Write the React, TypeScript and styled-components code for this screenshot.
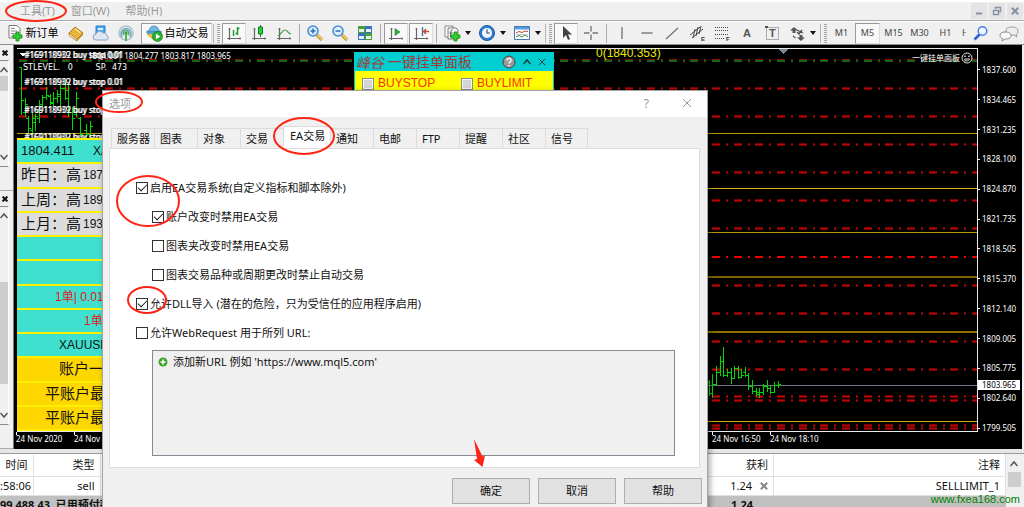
import React from "react";
import styled, { createGlobalStyle, css } from "styled-components";

const uiFont = `"Noto Sans", "Noto Sans CJK SC", sans-serif`;
const panelFont = `"Liberation Sans", "Noto Sans CJK SC", sans-serif`;

const GlobalStyle = createGlobalStyle`
  * { box-sizing: border-box; }
  html, body { margin: 0; background: #f0f0f0; }
  body { font: 11px/16px ${uiFont}; color: #111; }
  button { font: inherit; color: inherit; padding: 0; border: 0; background: none; }
`;

const Shell = styled.div`
  position: relative;
  display: flex;
  flex-direction: column;
  height: 100vh;
  overflow: hidden;
`;

/* ---------- menu ---------- */

const MenuBar = styled.nav`
  display: flex;
  align-items: center;
  flex: none;
  height: 21px;
  padding-left: 20px;
  border-top: 2px solid #fff;
  border-bottom: 1px solid #a9a9a9;
  background: #f0f0f0;
`;

const MenuItem = styled.button`
  margin-right: 16px;
  color: #999;
  white-space: nowrap;
`;

const WindowButtons = styled.div`
  display: flex;
  gap: 2px;
  margin-left: auto;
  padding-right: 1px;
`;

const WindowButton = styled.button`
  display: grid;
  place-items: center;
  width: 16px;
  height: 16px;
  background: #e4e4e4;
`;

/* ---------- toolbar ---------- */

const Toolbar = styled.div`
  display: flex;
  align-items: center;
  flex: none;
  gap: 1px;
  height: 24px;
  padding-left: 4px;
  border-top: 1px solid #fff;
  border-bottom: 1px solid #8d8d8d;
  background: #f0f0f0;
`;

const pressedLook = css`
  background: #f9f9f9;
  border: 1px solid #dcdcdc;
  border-top-color: #9a9a9a;
  border-left-color: #9a9a9a;
`;

const ToolButton = styled.button<{ $pressed?: boolean; $width?: number }>`
  display: flex;
  align-items: center;
  justify-content: center;
  flex: none;
  gap: 2px;
  width: ${(p) => p.$width ?? 24}px;
  height: 21px;
  overflow: hidden;
  white-space: nowrap;
  ${(p) => p.$pressed && pressedLook}
`;

const WideButton = styled(ToolButton)`
  color: #000;
`;

const ToolGroup = styled.div`
  display: flex;
  gap: 1px;
  margin: 0 2px 0 3px;
`;

const FrameButton = styled(ToolButton)`
  width: 25px;
  font-size: 9px;
  color: #444;
`;

const ClippedFrame = styled(FrameButton)`
  width: 7px;
  justify-content: flex-start;
  padding-left: 3px;
`;

const Separator = styled.span`
  flex: none;
  width: 1px;
  height: 19px;
  margin: 0 2px;
  background: #a8a8a8;
`;

const Grip = styled.span`
  flex: none;
  width: 8px;
  height: 19px;
  border-left: 1px solid #b4b4b4;
  background: repeating-linear-gradient(#a5a5a5 0 1px, #f0f0f0 1px 2px) 3px 0 / 3px 100% no-repeat;
`;

const Spacer = styled.span`
  flex: 1;
`;

const DropButton = styled(ToolButton)`
  width: 34px;
  gap: 4px;
`;

const Caret = styled.span`
  border: 3px solid transparent;
  border-top: 4px solid #111;
  border-bottom: 0;
`;

/* ---------- workspace ---------- */

const Workspace = styled.main`
  display: grid;
  grid-template-columns: 14px minmax(0, 1fr) 2px;
  flex: 1;
  min-height: 0;
`;

const SideColumn = styled.aside`
  display: grid;
  grid-template-rows: 146px minmax(0, 1fr);
  background: #f0f0f0;
  border-right: 1px solid #777;
`;

const SidePanel = styled.section`
  display: flex;
  flex-direction: column;
  padding-bottom: 23px;
  border-bottom: 1px solid #aaa;
`;

const SideClose = styled.button`
  display: flex;
  align-items: center;
  height: 15px;
  padding-left: 2px;
`;

const Scroller = styled.div`
  display: flex;
  flex: 1;
  flex-direction: column;
  justify-content: space-between;
  width: 9px;
  padding: 5px 0;
  border: 1px solid #8a8a8a;
  border-left: 0;
  border-right-color: #fff;
`;

const ScrollThumb = styled.span<{ $size: number; $before: number }>`
  width: 8px;
  height: ${(p) => p.$size}px;
  margin-top: ${(p) => p.$before}px;
  margin-bottom: auto;
  background: #cdcdcd;
`;

const ChartWindow = styled.section`
  display: grid;
  grid-template-columns: minmax(0, 1fr) 44px;
  grid-template-rows: minmax(0, 1fr) 17px;
  padding: 3px 0 0 3px;
  background: #000;
  color: #fff;
  font-size: 8px;
  line-height: 10px;
`;

const Plot = styled.div`
  position: relative;
  overflow: hidden;
  border: 1px solid #e8e8e8;
  border-left: 0;
`;

const PlotDrawing = styled.svg`
  display: block;
  width: 100%;
  height: 100%;
`;

const PriceAxis = styled.div`
  position: relative;
  display: flex;
  flex-direction: column;
  grid-row: 1 / 3;
  grid-column: 2;
  padding: 7px 0 6px;
`;

const PriceLabel = styled.span`
  display: flex;
  align-items: center;
  flex: 1;
  &::before {
    content: "";
    width: 2px;
    height: 1px;
    margin-right: 2px;
    background: #fff;
  }
`;

const CurrentPrice = styled.span`
  position: absolute;
  top: 332px;
  left: 0;
  width: 42px;
  padding-left: 4px;
  background: #fff;
  color: #000;
`;

const TimeAxis = styled.div`
  display: grid;
  grid-template-columns: repeat(16, 58px);
  margin-left: -1px;
  overflow: hidden;
  white-space: nowrap;
`;

const TimeLabel = styled.span<{ $slot: number }>`
  grid-row: 1;
  grid-column: ${(p) => p.$slot};
  padding-top: 2px;
  &::before {
    content: "";
    display: block;
    width: 1px;
    height: 3px;
    margin: -2px 0 -1px;
    background: #fff;
  }
`;

const OrderNote = styled.span<{ $x: number; $y: number }>`
  position: absolute;
  left: ${(p) => p.$x}px;
  top: ${(p) => p.$y}px;
  white-space: pre;
`;

const LevelNote = styled(OrderNote)`
  font-family: "DejaVu Sans", sans-serif;
`;

const FibNote = styled(OrderNote)`
  color: #e8e800;
  font: 12px/12px ${panelFont};
`;

const OneClick = styled.button`
  position: absolute;
  top: 3px;
  right: 4px;
  display: flex;
  align-items: center;
  gap: 1px;
`;

/* ---------- info panel ---------- */

const InfoPanel = styled.div`
  position: absolute;
  top: 89px;
  bottom: 0;
  left: 0;
  display: flex;
  flex-direction: column;
  width: 200px;
  border-top: 2px solid #fff000;
`;

const rowColors = { teal: "#40e0d0", grey: "#dcdcdc", gold: "#ffd700" };

const InfoRow = styled.div<{ $tone: keyof typeof rowColors; $indent?: number; $red?: boolean }>`
  display: flex;
  align-items: center;
  flex: 1;
  gap: 2px;
  overflow: hidden;
  padding-left: ${(p) => p.$indent ?? 4}px;
  border-bottom: 2px solid #fff000;
  background: ${(p) => rowColors[p.$tone]};
  color: ${(p) => (p.$red ? "#e01818" : "#111")};
  font: 12px/20px ${panelFont};
  white-space: pre;
`;

const Quote = styled.span`
  width: 70px;
  font-size: 13px;
`;

const BigText = styled.span`
  font-size: 15px;
`;

/* ---------- pending order panel ---------- */

const OrderPanel = styled.div`
  position: absolute;
  top: 3px;
  left: 337px;
  width: 200px;
  height: 80px;
  border: 1px solid #00ced1;
  background: #ff0;
`;

const OrderPanelHead = styled.div`
  display: flex;
  align-items: center;
  height: 18px;
  padding: 0 7px 0 1px;
  background: #00ced1;
  color: #a03c3c;
  font: 14px/18px ${panelFont};
  white-space: nowrap;
`;

const Script = styled.span`
  margin-right: 4px;
  font-family: "Noto Sans CJK SC", serif;
  font-style: italic;
`;

const HeadTools = styled.span`
  display: flex;
  align-items: center;
  gap: 7px;
  margin-left: auto;
`;

const OrderPanelBody = styled.div`
  display: grid;
  grid-template-columns: 99px 1fr;
  padding: 6px 7px;
`;

const OrderKind = styled.label`
  display: flex;
  align-items: center;
  gap: 4px;
  color: #ff3000;
  font: 12px/13px ${panelFont};
`;

const GreyTick = styled.input`
  appearance: none;
  width: 12px;
  height: 12px;
  margin: 0;
  border: 1px solid #8c8c8c;
  background: #d4d4d4;
  box-shadow: inset 0 0 0 1px #f4f4f4;
`;

/* ---------- terminal ---------- */

const Terminal = styled.section`
  display: flex;
  align-items: flex-start;
  flex: none;
  height: 58px;
  overflow: hidden;
  border-top: 4px solid #e6e6e6;
  box-shadow: inset 0 1px #9c9c9c;
  padding: 1px 2px 0 0;
  background: #f0f0f0;
`;

const Trades = styled.table`
  flex: 1;
  border-collapse: collapse;
  table-layout: fixed;
  width: 100%;
  background: #fff;
  white-space: nowrap;
  td, th {
    height: 19px;
    padding: 0 5px 0 0;
    border-right: 1px solid #e0e0e0;
    border-bottom: 1px solid #e0e0e0;
    font-weight: 400;
    text-align: right;
    line-height: 16px;
  }
  th { height: 22px; }
`;

const Col = styled.col<{ $w?: number }>`
  width: ${(p) => (p.$w ? `${p.$w}px` : "auto")};
`;

const SummaryRow = styled.tr`
  background: #c0c0c0;
  && td {
    border-color: #c0c0c0;
    padding-right: 20px;
    font-weight: 700;
  }
  && td:first-child { padding: 0; text-align: left; }
`;

const Profit = styled.span`
  display: inline-flex;
  align-items: center;
  gap: 8px;
`;

const TerminalScroll = styled.div`
  display: flex;
  flex-direction: column;
  align-items: center;
  gap: 4px;
  width: 16px;
  padding-top: 6px;
  background: #f0f0f0;
`;

const TerminalThumb = styled.span`
  width: 13px;
  height: 15px;
  background: #cdcdcd;
`;

const SiteLink = styled.a`
  position: absolute;
  right: 4px;
  bottom: 0;
  color: #008000;
  font: 11px/16px ${panelFont};
  text-decoration: none;
`;

/* ---------- dialog ---------- */

const Dialog = styled.section`
  position: absolute;
  top: 90px;
  left: 102px;
  display: flex;
  flex-direction: column;
  width: 606px;
  padding-bottom: 12px;
  border: 1px solid #a4a4a4;
  background: #f0f0f0;
  box-shadow: 2px 2px 6px rgba(0, 0, 0, 0.35);
`;

const DialogTitle = styled.header`
  display: flex;
  align-items: center;
  height: 26px;
  padding: 0 15px 0 6px;
  background: #fff;
  color: #999;
`;

const TitleButtons = styled.div`
  display: flex;
  align-items: center;
  gap: 33px;
  margin-left: auto;
  font-size: 12px;
`;

const TabStrip = styled.div`
  display: flex;
  align-items: flex-end;
  height: 31px;
  padding-left: 8px;
`;

const Tab = styled.button<{ $active?: boolean }>`
  width: 43px;
  height: 20px;
  padding-left: 5px;
  border: 1px solid #dcdcdc;
  border-width: 1px 0 0 1px;
  text-align: left;
  white-space: nowrap;
  &:last-child { border-right-width: 1px; }
  ${(p) =>
    p.$active &&
    css`
      width: 47px;
      height: 23px;
      margin-bottom: -1px;
      padding: 0 0 4px 6px;
      background: #fff;
    `}
`;

const TabPage = styled.div`
  margin: 0 7px 0 6px;
  padding: 24px 24px 11px 26px;
  border: 1px solid #dcdcdc;
  background: #fff;
`;

const Option = styled.label<{ $nested?: boolean }>`
  display: flex;
  align-items: center;
  gap: 2px;
  height: 29px;
  padding-left: ${(p) => (p.$nested ? 16 : 0)}px;
  white-space: nowrap;
`;

const Tick = styled.input`
  appearance: none;
  display: grid;
  place-items: center;
  width: 12px;
  height: 12px;
  margin: 0;
  border: 1px solid #333;
  background: #fff;
  &:checked::after {
    content: "";
    width: 8px;
    height: 4px;
    margin-bottom: 3px;
    border: 1px solid #222;
    border-width: 0 0 1px 1px;
    transform: rotate(-45deg);
  }
`;

const UrlList = styled.ul`
  height: 106px;
  margin: 3px 0 0 16px;
  padding: 2px 5px;
  border: 1px solid #858a94;
  background: #f0f0f0;
  list-style: none;
`;

const UrlItem = styled.li`
  display: flex;
  align-items: center;
  gap: 5px;
  height: 18px;
`;

const DialogButtons = styled.footer`
  display: flex;
  justify-content: flex-end;
  gap: 8px;
  padding: 10px 5px 0 0;
`;

const DialogButton = styled.button`
  width: 78px;
  height: 26px;
  border: 1px solid #adadad;
  background: #e1e1e1;
`;

const Marks = styled.svg`
  position: absolute;
  top: 0;
  left: 0;
  pointer-events: none;
`;

/* ---------- icons ---------- */

const Icon = ({ children, size = 18 }: { children: React.ReactNode; size?: number }) => (
  <svg width={size} height={size} viewBox="0 0 18 18" fill="none" aria-hidden="true">
    {children}
  </svg>
);

const Plus = ({ x, y }: { x: number; y: number }) => (
  <path
    d={`M${x} ${y}h3v3h3v3h-3v3h-3v-3h-3v-3h3z`}
    fill="#2fd02f"
    stroke="#0d8a0d"
    strokeWidth=".8"
  />
);

const Axes = () => (
  <path d="M4.500 4v12M2 14.500h14M3.500 5h2M15 13.500v2" stroke="#666" strokeWidth="1.200" />
);

const NewOrderIcon = () => (
  <Icon>
    <path d="M3 1.500h8l3 3V14H3z" fill="#fff" stroke="#777" />
    <path d="M5 4.500h4M5 7h6M5 9.500h5M5 12h3" stroke="#888" />
    <Plus x={10} y={8} />
  </Icon>
);

const BookIcon = () => (
  <Icon>
    <path d="M2 9l6-6 8 6-6 7z" fill="#e9b53c" stroke="#a87414" />
    <path d="M2 9v2.500l8 5.500V15z" fill="#fff3cf" stroke="#a87414" strokeWidth=".8" />
    <path d="M10 15.500l6-6.500v2l-6 6z" fill="#c58a1e" />
    <path d="M8 4.500l5.500 4.500" stroke="#fbe08a" strokeWidth="1.500" />
  </Icon>
);

const CloudIcon = () => (
  <Icon>
    <path d="M4 2h9v9H4z" fill="#4aa7ee" stroke="#2b7cc4" />
    <path d="M6 4h5v2H6zM6 7h2v3H6z" fill="#d9efff" />
    <path d="M4 16a3 3 0 010-6 4 4 0 017-1 3.500 3.500 0 014 3 2.200 2.200 0 010 4z" fill="#dfe6f2" stroke="#8ea2c2" />
  </Icon>
);

const SignalIcon = () => (
  <Icon>
    <circle cx="9" cy="9" r="7" stroke="#b0c4c8" strokeWidth="1.600" />
    <path d="M5.500 13a5 5 0 117 0" stroke="#6fa2c8" strokeWidth="1.500" />
    <path d="M7 11a2.800 2.800 0 114 0" stroke="#43a36b" strokeWidth="1.300" />
    <circle cx="9" cy="9" r="1.700" fill="#3aa13a" />
    <path d="M9 10v7" stroke="#49b34d" strokeWidth="2" />
  </Icon>
);

const AutoIcon = () => (
  <Icon>
    <path d="M2 10l7 6 7-5-2-3H4z" fill="#f0c63c" stroke="#b98d1c" strokeWidth=".8" />
    <ellipse cx="9" cy="8" rx="8" ry="2.500" fill="#4f9ed0" />
    <path d="M4 7.500C4 0 14 0 14 7.500z" fill="#6fb6e0" stroke="#3683b4" strokeWidth=".7" />
    <circle cx="12.500" cy="12.500" r="5" fill="#2eb135" stroke="#0f7a1a" strokeWidth=".7" />
    <path d="M11 9.800l4.300 2.700-4.300 2.700z" fill="#fff" />
  </Icon>
);

const BarsIcon = () => (
  <Icon>
    <Axes />
    <path d="M8.500 6v6M12.500 3v8M10.500 9.500h2M12.500 4.500h2" stroke="#16962a" strokeWidth="1.400" />
  </Icon>
);
const CandleIcon = () => (
  <Icon>
    <Axes />
    <path d="M10.500 1v12" stroke="#0b7f1c" />
    <path d="M8.500 3h4v7h-4z" fill="#28cf3c" stroke="#0b7f1c" />
  </Icon>
);
const LineIcon = () => (
  <Icon>
    <Axes />
    <path d="M3 12c3-1 4-6 7-6s2 3 6 4" stroke="#3a9d4a" strokeWidth="1.200" />
  </Icon>
);

const Lens = ({ minus }: { minus?: boolean }) => (
  <Icon>
    <path d="M11 11l5 5" stroke="#c79b2c" strokeWidth="3.200" />
    <path d="M11.500 11l4.500 4.500" stroke="#f3d778" strokeWidth="1.200" />
    <circle cx="7" cy="7" r="5" fill="#dcefff" stroke="#4a8ed2" strokeWidth="1.600" />
    <path d={minus ? "M4.500 7h5" : "M4.500 7h5M7 4.500v5"} stroke="#2d6db3" strokeWidth="1.500" />
  </Icon>
);

const TilesIcon = () => (
  <Icon>
    <path d="M2 2h7v7H2zM9 9h7v7H9z" fill="#4aa034" />
    <path d="M9 2h7v7H9zM2 9h7v7H2z" fill="#3a6fca" />
    <path d="M3 5h5v3H3zM10 5h5v3h-5zM3 12h5v3H3zM10 12h5v3h-5z" fill="#e6f2e6" />
  </Icon>
);

const ScrollIcon = () => (
  <Icon>
    <Axes />
    <path d="M8 4.500l5 3.500-5 3.500z" fill="#2fae3c" stroke="#11802b" strokeWidth=".6" />
  </Icon>
);
const ShiftIcon = () => (
  <Icon>
    <Axes />
    <path d="M10.500 3v9" stroke="#3f74b5" strokeWidth="1.400" />
    <path d="M17 7.500h-5M14 5l-2.500 2.500L14 10" stroke="#c4482a" strokeWidth="1.300" />
  </Icon>
);

const IndicatorIcon = () => (
  <Icon>
    <path d="M2 2h8v11H2z" fill="#fff" stroke="#888" />
    <path d="M5 4h8l2 2v9H5z" fill="#f7f7f7" stroke="#777" />
    <path d="M9.500 6c-2-.5-1.500 2-2 7M6.500 9h3" stroke="#555" />
    <Plus x={11} y={8} />
  </Icon>
);
const ClockIcon = () => (
  <Icon>
    <circle cx="9" cy="9" r="7.500" fill="#2f7fd6" stroke="#1b5598" />
    <circle cx="9" cy="9" r="5" fill="#f3f9ff" />
    <path d="M9 5.500V9h3" stroke="#2a4c7c" strokeWidth="1.200" />
  </Icon>
);
const TemplateIcon = () => (
  <Icon>
    <path d="M1.500 2.500h15v13h-15z" fill="#fff" stroke="#4878b4" />
    <path d="M2 3h14v2.500H2z" fill="#5a9ae0" />
    <path d="M3 9l3-1.500 3 1 3-1.500 3 .5" stroke="#b5452d" />
    <path d="M3 13l3-1.500 3 1.500 3-2 3 2" stroke="#2d8e3b" />
    <path d="M3 10.500h12" stroke="#aab" strokeWidth=".6" />
  </Icon>
);

const CursorIcon = () => (
  <Icon>
    <path d="M6 2v12l3-3 2 5 2-1-2-4.500h4z" fill="#444" />
  </Icon>
);
const CrossIcon = () => (
  <Icon>
    <path d="M9 2v5.500M9 10.500V16M2 9h5.500M10.500 9H16" stroke="#777" strokeWidth="1.400" />
  </Icon>
);
const VLineIcon = () => (
  <Icon>
    <path d="M9 3v12" stroke="#777" strokeWidth="1.400" />
  </Icon>
);
const HLineIcon = () => (
  <Icon>
    <path d="M3.500 9h11" stroke="#777" strokeWidth="1.400" />
  </Icon>
);
const TrendIcon = () => (
  <Icon>
    <path d="M3 15L15 4" stroke="#777" strokeWidth="1.400" />
  </Icon>
);

const LetterMark = styled.text`
  font: 700 6px ${panelFont};
  fill: #333;
`;
const BigLetter = styled.text`
  font: 700 11px ${panelFont};
  fill: #555;
`;

const ChannelIcon = () => (
  <Icon>
    <path d="M2 11L12 3M4 14L15 5M5 14l2-9M8 12l2-9M11 10l2-8" stroke="#444" />
    <LetterMark x="13" y="17">E</LetterMark>
  </Icon>
);
const FiboIcon = () => (
  <Icon>
    <path d="M2 3.500h14M2 6.500h14M2 10.500h14M2 14.500h9" stroke="#444" strokeDasharray="1 1" />
    <LetterMark x="13" y="17">F</LetterMark>
  </Icon>
);
const TextIcon = () => (
  <Icon>
    <BigLetter x="5" y="13">A</BigLetter>
  </Icon>
);
const LabelIcon = () => (
  <Icon>
    <path d="M3.500 3.500h12v12h-12z" stroke="#666" strokeDasharray="1 1" />
    <path d="M2 2h3v2H2z" fill="#555" />
    <BigLetter x="6" y="13">T</BigLetter>
  </Icon>
);
const ArrowsIcon = () => (
  <Icon>
    <path d="M6 3l4 3.500H7.500V9h-3V6.500H2zM13 17l-4-3.500h2.500V11h3v2.500H17z" fill="#555" />
    <path d="M5 12l2.500 2M9 6l6 3" stroke="#555" strokeWidth="1.200" />
    <path d="M9 8l2 2 3-4" stroke="#444" strokeWidth="1.300" />
  </Icon>
);
const SearchIcon = () => (
  <Icon>
    <path d="M7.500 10.500L2.500 15.500" stroke="#2c62d6" strokeWidth="2.600" />
    <circle cx="10.500" cy="7" r="4.300" fill="#eef5ff" stroke="#4a80e0" strokeWidth="1.500" />
  </Icon>
);
const ChatIcon = () => (
  <svg width="20" height="18" viewBox="0 0 20 18" aria-hidden="true">
    <path d="M13 3c4 0 6 1.500 6 4s-1 3-2 3.500l1 2.500-3-2c-5 .5-8-1-8-4s2-4 6-4z" fill="#eee" stroke="#999" />
    <path d="M6 8c4 0 6 1 6 3.500S10 15 6 15l-3 2 .5-2.500C2 14 1 13 1 11.500 1 9 3 8 6 8z" fill="#f8f8f8" stroke="#8a8a8a" />
  </svg>
);

const Cross = ({ size, color, width = 1 }: { size: number; color: string; width?: number }) => (
  <svg width={size} height={size} viewBox="0 0 10 10" aria-hidden="true">
    <path d="M1 1l8 8M9 1L1 9" stroke={color} strokeWidth={(width * 10) / size} />
  </svg>
);

const Chevron = ({ down, color = "#555", size = 8 }: { down?: boolean; color?: string; size?: number }) => (
  <svg width={size} height={size} viewBox="0 0 8 8" fill="none" aria-hidden="true">
    <path d={down ? "M0.500 2l3.500 4 3.500-4" : "M0.500 6l3.500-4 3.500 4"} stroke={color} strokeWidth="1.500" />
  </svg>
);

/* ---------- chart data ---------- */

const redLevels = [88, 116, 144, 172, 200, 228, 285, 313, 341, 369, 396, 400, 425, 428];
const goldLevels = [
  { y: 133, color: "#b8960c" },
  { y: 188, color: "#d8b010" },
  { y: 232, color: "#b8960c" },
  { y: 276, color: "#7a6400", thick: true },
  { y: 331, color: "#8c7200", thick: true },
  { y: 421, color: "#d8a810" },
];
const prices = [
  "1837.600", "1834.465", "1831.235", "1828.100", "1824.870", "1821.735", "1818.505",
  "1815.370", "1812.140", "1809.005", "1805.775", "1802.640", "1799.505",
];

/* x, high, low, open, close */
const bars: number[][] = [
  [21, 67, 115, 67, 100], [25, 98, 117, 112, 104], [28, 116, 134, 118, 128], [32, 112, 134, 130, 118],
  [35, 114, 131, 122, 116], [39, 100, 123, 118, 104], [42, 95, 107, 104, 97], [46, 87, 100, 97, 95],
  [50, 94, 105, 96, 102], [53, 92, 106, 103, 98], [57, 90, 103, 98, 96], [60, 85, 107, 94, 88],
  [65, 80, 100, 88, 98], [68, 83, 117, 90, 112], [72, 107, 130, 112, 118], [76, 92, 117, 114, 98],
  [80, 117, 137, 118, 134], [86, 124, 137, 130, 134], [90, 121, 137, 134, 126],
  [709, 380, 396, 382, 393], [712, 374, 398, 393, 384], [716, 366, 385, 384, 372], [720, 356, 376, 372, 361],
  [723, 347, 377, 361, 375], [727, 369, 377, 375, 372], [731, 368, 384, 372, 378], [734, 366, 379, 378, 368],
  [738, 366, 379, 368, 377], [741, 369, 378, 377, 375], [745, 367, 377, 372, 375], [748, 373, 390, 375, 386],
  [752, 380, 394, 386, 391], [756, 388, 396, 391, 392], [759, 388, 398, 394, 392], [763, 384, 395, 392, 386],
  [767, 380, 392, 386, 388], [770, 385, 394, 388, 392], [774, 382, 393, 392, 385], [778, 381, 388, 385, 384],
];

const Chart = () => (
  <PlotDrawing aria-hidden="true">
    <g transform="translate(-17 -49)" shapeRendering="crispEdges">
      <g strokeDasharray="8 6 2 5.670" strokeDashoffset="-1.600">
        <line x1="17" x2="200%" y1="59.500" y2="59.500" stroke="#8c0c0c" />
        <line x1="17" x2="200%" y1="61" y2="61" stroke="#156315" strokeWidth="2" />
        {redLevels.map((y) => (
          <React.Fragment key={y}>
            <line x1="17" x2="200%" y1={y + 0.5} y2={y + 0.5} stroke="#780000" strokeWidth="3" />
            <line x1="17" x2="200%" y1={y + 0.5} y2={y + 0.5} stroke="#b00808" />
          </React.Fragment>
        ))}
        <line x1="17" x2="200%" y1="256.500" y2="256.500" stroke="#f00000" strokeWidth="2" />
      </g>
      {goldLevels.map((l) => (
        <line key={l.y} x1="17" x2="200%" y1={l.thick ? l.y + 1 : l.y + 0.5} y2={l.thick ? l.y + 1 : l.y + 0.5} stroke={l.color} strokeWidth={l.thick ? 2 : 1} />
      ))}
      <line x1="17" x2="200%" y1="385.500" y2="385.500" stroke="#6c7684" />
      {bars.map(([x, hi, lo, open, close]) => (
        <path key={x} d={`M${x + 0.5} ${hi}V${lo}M${x - 2} ${open + 0.5}h2M${x + 1} ${close + 0.5}h2`} stroke="#00d800" />
      ))}
      <path d="M778 49h10l-5 5z" fill="#778899" />
      <path d="M20 53h6l-3 4z" fill="#fff" />
    </g>
  </PlotDrawing>
);

const OrderLine = ({ y }: { y: number }) => (
  <>
    <OrderNote $x={7} $y={y}>#169118939 buy stop 0.01</OrderNote>
    <OrderNote $x={8} $y={y}>#169110902 buy stop 0.01</OrderNote>
  </>
);

const tabs = ["服务器", "图表", "对象", "交易", "EA交易", "通知", "电邮", "FTP", "提醒", "社区", "信号"];
const options = [
  { text: "启用EA交易系统(自定义指标和脚本除外)", on: true },
  { text: "账户改变时禁用EA交易", on: true, nested: true },
  { text: "图表夹改变时禁用EA交易", nested: true },
  { text: "图表交易品种或周期更改时禁止自动交易", nested: true },
  { text: "允许DLL导入 (潜在的危险，只为受信任的应用程序启用)", on: true },
  { text: "允许WebRequest 用于所列 URL:" },
];

export default function App() {
  return (
    <Shell>
      <GlobalStyle />
      <MenuBar>
        <MenuItem>工具(T)</MenuItem>
        <MenuItem>窗口(W)</MenuItem>
        <MenuItem>帮助(H)</MenuItem>
        <WindowButtons>
          <WindowButton aria-label="Minimize">
            <svg width="10" height="10"><path d="M2 7.500h6" stroke="#8592a5" strokeWidth="2" /></svg>
          </WindowButton>
          <WindowButton aria-label="Restore">
            <svg width="10" height="10" fill="none">
              <path d="M3.500 3V1.500h5v4H7M1.500 4.500h5v4h-5z" stroke="#8592a5" strokeWidth="1.400" />
            </svg>
          </WindowButton>
          <WindowButton aria-label="Close"><Cross size={8} color="#8592a5" width={2} /></WindowButton>
        </WindowButtons>
      </MenuBar>

      <Toolbar>
        <WideButton $width={56}><NewOrderIcon />新订单</WideButton>
        <ToolGroup>
          <ToolButton aria-label="Market"><BookIcon /></ToolButton>
          <ToolButton aria-label="Cloud"><CloudIcon /></ToolButton>
          <ToolButton aria-label="Signals"><SignalIcon /></ToolButton>
        </ToolGroup>
        <WideButton $width={71} $pressed><AutoIcon />自动交易</WideButton>
        <Grip />
        <ToolButton $pressed aria-label="Bars"><BarsIcon /></ToolButton>
        <ToolButton aria-label="Candles"><CandleIcon /></ToolButton>
        <ToolButton aria-label="Line"><LineIcon /></ToolButton>
        <Separator />
        <ToolButton aria-label="Zoom in"><Lens /></ToolButton>
        <ToolButton aria-label="Zoom out"><Lens minus /></ToolButton>
        <ToolButton aria-label="Tile"><TilesIcon /></ToolButton>
        <Separator />
        <ToolButton $pressed aria-label="Auto scroll"><ScrollIcon /></ToolButton>
        <ToolButton $pressed aria-label="Chart shift"><ShiftIcon /></ToolButton>
        <Separator />
        <DropButton $width={34} aria-label="Indicators"><IndicatorIcon /><Caret /></DropButton>
        <DropButton $width={34} aria-label="Periods"><ClockIcon /><Caret /></DropButton>
        <DropButton $width={34} aria-label="Templates"><TemplateIcon /><Caret /></DropButton>
        <Grip />
        <ToolButton $pressed aria-label="Cursor"><CursorIcon /></ToolButton>
        <ToolButton aria-label="Crosshair"><CrossIcon /></ToolButton>
        <Separator />
        <ToolButton aria-label="Vertical line"><VLineIcon /></ToolButton>
        <ToolButton aria-label="Horizontal line"><HLineIcon /></ToolButton>
        <ToolButton aria-label="Trendline"><TrendIcon /></ToolButton>
        <ToolButton aria-label="Channel"><ChannelIcon /></ToolButton>
        <ToolButton aria-label="Fibonacci"><FiboIcon /></ToolButton>
        <ToolButton aria-label="Text"><TextIcon /></ToolButton>
        <ToolButton aria-label="Label"><LabelIcon /></ToolButton>
        <DropButton $width={34} aria-label="Arrows"><ArrowsIcon /><Caret /></DropButton>
        <Grip />
        <FrameButton>M1</FrameButton>
        <FrameButton $pressed>M5</FrameButton>
        <FrameButton>M15</FrameButton>
        <FrameButton>M30</FrameButton>
        <FrameButton>H1</FrameButton>
        <ClippedFrame>H</ClippedFrame>
        <Spacer />
        <ToolButton aria-label="Search"><SearchIcon /></ToolButton>
        <ToolButton $width={30} aria-label="Chat"><ChatIcon /></ToolButton>
      </Toolbar>

      <Workspace>
        <SideColumn>
          <SidePanel>
            <SideClose aria-label="Close"><Cross size={6} color="#111" width={2} /></SideClose>
            <Scroller>
              <Chevron />
              <ScrollThumb $size={15} $before={2} />
              <Chevron down />
            </Scroller>
          </SidePanel>
          <SidePanel>
            <SideClose aria-label="Close"><Cross size={6} color="#111" width={2} /></SideClose>
            <Scroller>
              <Chevron />
              <ScrollThumb $size={102} $before={62} />
              <Chevron down />
            </Scroller>
          </SidePanel>
        </SideColumn>

        <ChartWindow>
          <Plot>
            <Chart />
            <OrderLine y={1} />
            <OrderNote $x={71} $y={2}>1804.001 1804.277 1803.817 1803.965</OrderNote>
            <LevelNote $x={6} $y={14}>STLEVEL.   0         SP.  473</LevelNote>
            <OrderLine y={28} />
            <OrderLine y={56} />
            <OrderLine y={83} />
            <FibNote $x={579} $y={-2}>0(1840.353)</FibNote>
            <OneClick>
              一键挂单面板
              <svg width="12" height="12" viewBox="0 0 12 12" fill="none">
                <circle cx="6" cy="6" r="5" stroke="#ddd" />
                <path d="M3.500 7c1 2.500 4 2.500 5 0z" stroke="#ddd" />
                <path d="M4 3.500v1.500M8 3.500v1.500" stroke="#ddd" strokeWidth="1.500" />
              </svg>
            </OneClick>

            <InfoPanel>
              <InfoRow $tone="teal"><Quote>1804.411</Quote>XAUUSD</InfoRow>
              <InfoRow $tone="grey"><BigText>昨日：高</BigText>187</InfoRow>
              <InfoRow $tone="grey"><BigText>上周：高</BigText>189</InfoRow>
              <InfoRow $tone="grey"><BigText>上月：高</BigText>193</InfoRow>
              <InfoRow $tone="teal" />
              <InfoRow $tone="teal" />
              <InfoRow $tone="teal" $red $indent={38}>1单| 0.01</InfoRow>
              <InfoRow $tone="teal" $red $indent={67}>1单</InfoRow>
              <InfoRow $tone="teal" $indent={42}>XAUUSD</InfoRow>
              <InfoRow $tone="gold" $indent={42}><BigText>账户一</BigText></InfoRow>
              <InfoRow $tone="gold" $indent={28}><BigText>平账户最</BigText></InfoRow>
              <InfoRow $tone="gold" $indent={28}><BigText>平账户最</BigText></InfoRow>
            </InfoPanel>

            <OrderPanel>
              <OrderPanelHead>
                <Script>峰谷</Script>一键挂单面板
                <HeadTools>
                  <svg width="14" height="14" viewBox="0 0 14 14">
                    <circle cx="7" cy="7" r="6" fill="#999" stroke="#444" />
                    <path d="M5 5.500c0-3 4-2.500 4-.2C9 7 7 6.800 7 8.500M7 10v1.400" stroke="#fff" strokeWidth="1.400" fill="none" />
                  </svg>
                  <Chevron color="#1c3c40" />
                  <Cross size={8} color="#1c3c40" width={1} />
                </HeadTools>
              </OrderPanelHead>
              <OrderPanelBody>
                <OrderKind><GreyTick type="checkbox" />BUYSTOP</OrderKind>
                <OrderKind><GreyTick type="checkbox" />BUYLIMIT</OrderKind>
              </OrderPanelBody>
            </OrderPanel>
          </Plot>
          <PriceAxis>
            {prices.map((p) => <PriceLabel key={p}>{p}</PriceLabel>)}
            <CurrentPrice>1803.965</CurrentPrice>
          </PriceAxis>
          <TimeAxis>
            <TimeLabel $slot={1}>24 Nov 2020</TimeLabel>
            <TimeLabel $slot={2}>24 Nov</TimeLabel>
            <TimeLabel $slot={13}>24 Nov 16:50</TimeLabel>
            <TimeLabel $slot={14}>24 Nov 18:10</TimeLabel>
          </TimeAxis>
        </ChartWindow>
      </Workspace>

      <Terminal>
        <Trades>
          <colgroup>
            <Col $w={33} />
            <Col $w={67} />
            <Col />
            <Col $w={66} />
            <Col $w={232} />
          </colgroup>
          <thead>
            <tr><th>时间</th><th>类型</th><th /><th>获利</th><th>注释</th></tr>
          </thead>
          <tbody>
            <tr>
              <td>:58:06</td>
              <td>sell</td>
              <td />
              <td><Profit>1.24 <Cross size={8} color="#888" width={2} /></Profit></td>
              <td>SELLLIMIT_1</td>
            </tr>
            <SummaryRow>
              <td colSpan={3}>99 488.43&nbsp; 已用预付款</td>
              <td>1.24</td>
              <td />
            </SummaryRow>
          </tbody>
        </Trades>
        <TerminalScroll>
          <Chevron />
          <TerminalThumb />
        </TerminalScroll>
      </Terminal>
      <SiteLink href="#">www.fxea168.com</SiteLink>

      <Dialog role="dialog" aria-label="选项">
        <DialogTitle>
          选项
          <TitleButtons>
            <button>?</button>
            <button aria-label="Close"><Cross size={10} color="#999" /></button>
          </TitleButtons>
        </DialogTitle>
        <TabStrip>
          {tabs.map((t) => <Tab key={t} $active={t === "EA交易"}>{t}</Tab>)}
        </TabStrip>
        <TabPage>
          {options.map((o) => (
            <Option key={o.text} $nested={o.nested}>
              <Tick type="checkbox" defaultChecked={o.on} />
              {o.text}
            </Option>
          ))}
          <UrlList>
            <UrlItem>
              <svg width="10" height="10" viewBox="0 0 10 10">
                <circle cx="5" cy="5" r="4.500" fill="#3fa42c" />
                <path d="M5 2.500v5M2.500 5h5" stroke="#fff" strokeWidth="1.600" />
              </svg>
              添加新URL 例如 'https://www.mql5.com'
            </UrlItem>
          </UrlList>
        </TabPage>
        <DialogButtons>
          <DialogButton>确定</DialogButton>
          <DialogButton>取消</DialogButton>
          <DialogButton>帮助</DialogButton>
        </DialogButtons>
      </Dialog>

      <Marks width="720" height="500" fill="none" stroke="#ff2414" strokeWidth="2" aria-hidden="true">
        <ellipse cx="36" cy="11" rx="30" ry="10" />
        <ellipse cx="119" cy="102" rx="23" ry="10" />
        <ellipse cx="304" cy="136" rx="30" ry="18" />
        <ellipse cx="148" cy="201" rx="31" ry="25" />
        <ellipse cx="147" cy="300" rx="19" ry="13" />
        <path d="M474 439l8.500 17.500 2.500-1-2.500 11.500-8.500-7 3-1z" fill="#ff2414" stroke="none" />
      </Marks>
    </Shell>
  );
}
